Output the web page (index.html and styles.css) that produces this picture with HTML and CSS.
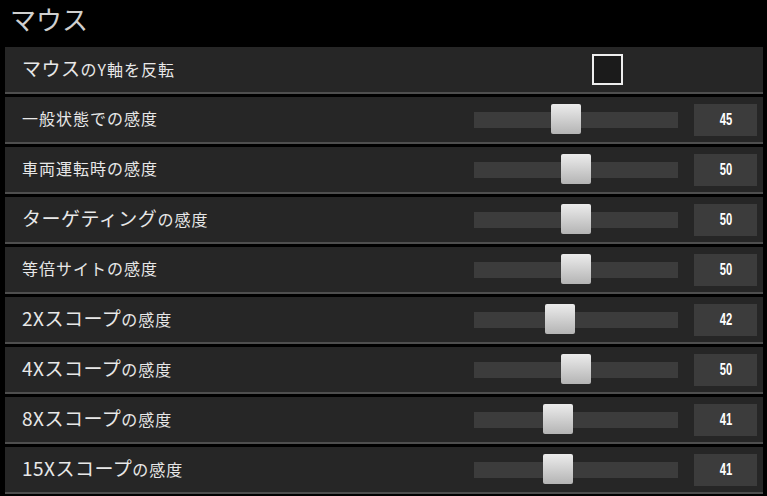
FILE: index.html
```html
<!DOCTYPE html>
<html lang="ja">
<head>
  <meta charset="UTF-8" />
  <title>マウス</title>
  <link rel="stylesheet" href="styles.css">
</head>
<body>
  <h1 class="title">マウス</h1>

  <div class="settings">
    <div class="row">
      <div class="label"><span class="big">マウス</span>のY軸を反転</div>
      <div class="checkbox"></div>
    </div>

    <div class="row">
      <div class="label">一般状態での感度</div>
      <div class="track"><div class="thumb" style="left: 77px"></div></div>
      <div class="value"><span>45</span></div>
    </div>

    <div class="row">
      <div class="label">車両運転時の感度</div>
      <div class="track"><div class="thumb" style="left: 87px"></div></div>
      <div class="value"><span>50</span></div>
    </div>

    <div class="row">
      <div class="label"><span class="big">ターゲティング</span>の感度</div>
      <div class="track"><div class="thumb" style="left: 87px"></div></div>
      <div class="value"><span>50</span></div>
    </div>

    <div class="row">
      <div class="label">等倍サイトの感度</div>
      <div class="track"><div class="thumb" style="left: 87px"></div></div>
      <div class="value"><span>50</span></div>
    </div>

    <div class="row">
      <div class="label"><span class="big">2Xスコープ</span>の感度</div>
      <div class="track"><div class="thumb" style="left: 71px"></div></div>
      <div class="value"><span>42</span></div>
    </div>

    <div class="row">
      <div class="label"><span class="big">4Xスコープ</span>の感度</div>
      <div class="track"><div class="thumb" style="left: 87px"></div></div>
      <div class="value"><span>50</span></div>
    </div>

    <div class="row">
      <div class="label"><span class="big">8Xスコープ</span>の感度</div>
      <div class="track"><div class="thumb" style="left: 69px"></div></div>
      <div class="value"><span>41</span></div>
    </div>

    <div class="row">
      <div class="label"><span class="big">15Xスコープ</span>の感度</div>
      <div class="track"><div class="thumb" style="left: 69px"></div></div>
      <div class="value"><span>41</span></div>
    </div>
  </div>
</body>
</html>
```

FILE: styles.css
```css
body {
  margin: 0;
  background: #000;
  color: #e6e6e6;
  font-family: "Noto Sans CJK JP", "Noto Sans", sans-serif;
  overflow: hidden;
}

.title {
  margin: 0;
  padding: 0 0 0 10px;
  height: 47px;
  font-size: 26px;
  font-weight: normal;
  line-height: 38px;
  color: #cfcfcf;
}

.settings {
  padding: 0 4px 0 5px;
}

.row {
  display: flex;
  align-items: center;
  height: 45px;
  margin-bottom: 3px;
  background: #262626;
  border-bottom: 2px solid #4e4e4e;
}

.label {
  flex: 1;
  padding-left: 17px;
  font-size: 16px;
  line-height: 20px;
  letter-spacing: 1px;
  color: #e8e8e8;
  margin-top: -3px;
}

.label .big {
  font-size: 19px;
  letter-spacing: 0.5px;
}

.checkbox {
  width: 27px;
  height: 27px;
  margin-right: 140px;
  border: 2px solid #eee;
  background: #1b1b1b;
}

.track {
  position: relative;
  width: 204px;
  height: 16px;
  background: #3c3c3c;
}

.thumb {
  position: absolute;
  top: -8px;
  width: 30px;
  height: 30px;
  border-radius: 2px;
  background: linear-gradient(#ececec, #b4b4b4);
}

.value {
  width: 63px;
  height: 32px;
  margin: 0 6px 0 16px;
  background: #3c3c3c;
  color: #fff;
  font-family: "Liberation Sans", sans-serif;
  font-size: 16px;
  font-weight: bold;
  line-height: 32px;
  text-align: center;
}

.value span {
  display: inline-block;
  transform: scaleX(0.7);
}
```
